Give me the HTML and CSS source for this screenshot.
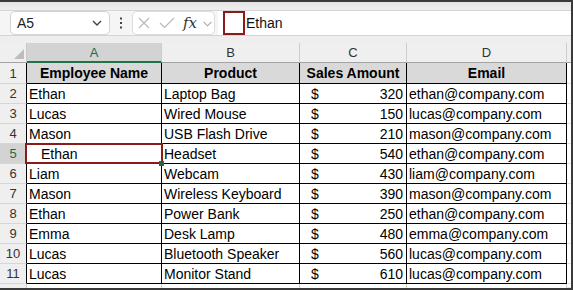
FILE: index.html
```html
<!DOCTYPE html>
<html>
<head>
<meta charset="utf-8">
<link rel="stylesheet" href="styles.css">
</head>
<body>
<div class="app">
  <div class="topband"></div>
  <div class="fbar">
    <div class="namebox"><span>A5</span>
      <svg width="10" height="6" viewBox="0 0 10 6"><polyline points="1,1 5,5 9,1" fill="none" stroke="#444" stroke-width="1.4"/></svg>
    </div>
    <div class="kebab"><svg width="4" height="12" viewBox="0 0 4 12"><rect x="1" y="0.5" width="2" height="2" fill="#444"/><rect x="1" y="5" width="2" height="2" fill="#444"/><rect x="1" y="9.5" width="2" height="2" fill="#444"/></svg></div>
    <div class="fbtns">
      <svg class="ic-x" width="12" height="12" viewBox="0 0 12 12"><path d="M1 1L11 11M11 1L1 11" stroke="#b9b9b9" stroke-width="1.2" fill="none"/></svg>
      <svg class="ic-ok" width="16" height="12" viewBox="0 0 16 12"><polyline points="1,6 5.5,10.5 15,1" stroke="#b9b9b9" stroke-width="1.2" fill="none"/></svg>
      <span class="fx">fx</span>
      <svg class="ic-dd" width="9" height="6" viewBox="0 0 9 6"><polyline points="0.5,0.8 4.5,4.8 8.5,0.8" stroke="#a8a8a8" stroke-width="1.1" fill="none"/></svg>
    </div>
    <div class="finput"><div class="redbox"></div><span class="ftext">Ethan</span></div>
  </div>
  <div class="gapband"></div>
  <div class="sheet">
    <div class="corner"><span class="tri"></span></div>
    <div class="ch sel">A</div>
    <div class="ch">B</div>
    <div class="ch">C</div>
    <div class="ch">D</div>
    <div class="ch end"></div>

    <div class="rh">1</div>
    <div class="c th">Employee Name</div>
    <div class="c th">Product</div>
    <div class="c th">Sales Amount</div>
    <div class="c th">Email</div>
    <div class="f"></div>

    <div class="rh">2</div>
    <div class="c">Ethan</div>
    <div class="c">Laptop Bag</div>
    <div class="c amt"><span>$</span><span>320</span></div>
    <div class="c">ethan@company.com</div>
    <div class="f"></div>

    <div class="rh">3</div>
    <div class="c">Lucas</div>
    <div class="c">Wired Mouse</div>
    <div class="c amt"><span>$</span><span>150</span></div>
    <div class="c">lucas@company.com</div>
    <div class="f"></div>

    <div class="rh">4</div>
    <div class="c">Mason</div>
    <div class="c">USB Flash Drive</div>
    <div class="c amt"><span>$</span><span>210</span></div>
    <div class="c">mason@company.com</div>
    <div class="f"></div>

    <div class="rh selrow">5</div>
    <div class="c active">Ethan</div>
    <div class="c">Headset</div>
    <div class="c amt"><span>$</span><span>540</span></div>
    <div class="c">ethan@company.com</div>
    <div class="f"></div>

    <div class="rh">6</div>
    <div class="c">Liam</div>
    <div class="c">Webcam</div>
    <div class="c amt"><span>$</span><span>430</span></div>
    <div class="c">liam@company.com</div>
    <div class="f"></div>

    <div class="rh">7</div>
    <div class="c">Mason</div>
    <div class="c">Wireless Keyboard</div>
    <div class="c amt"><span>$</span><span>390</span></div>
    <div class="c">mason@company.com</div>
    <div class="f"></div>

    <div class="rh">8</div>
    <div class="c">Ethan</div>
    <div class="c">Power Bank</div>
    <div class="c amt"><span>$</span><span>250</span></div>
    <div class="c">ethan@company.com</div>
    <div class="f"></div>

    <div class="rh">9</div>
    <div class="c">Emma</div>
    <div class="c">Desk Lamp</div>
    <div class="c amt"><span>$</span><span>480</span></div>
    <div class="c">emma@company.com</div>
    <div class="f"></div>

    <div class="rh">10</div>
    <div class="c">Lucas</div>
    <div class="c">Bluetooth Speaker</div>
    <div class="c amt"><span>$</span><span>560</span></div>
    <div class="c">lucas@company.com</div>
    <div class="f"></div>

    <div class="rh">11</div>
    <div class="c">Lucas</div>
    <div class="c">Monitor Stand</div>
    <div class="c amt"><span>$</span><span>610</span></div>
    <div class="c">lucas@company.com</div>
    <div class="f"></div>

    <div class="rh last"></div>
    <div class="g"></div>
    <div class="g"></div>
    <div class="g"></div>
    <div class="g"></div>
    <div class="f"></div>
  </div>
</div>
</body>
</html>
```
FILE: styles.css
```css
* { box-sizing: border-box; margin: 0; padding: 0; }
html, body { width: 573px; height: 290px; overflow: hidden; background: #fff; }
body { font-family: "Liberation Sans", Arial, sans-serif; color: #000; }

.app {
  width: 573px; height: 290px;
  border-top: 2px solid #3a3a3a;
  border-right: 2px solid #3a3a3a;
  border-bottom: 2px solid #3a3a3a;
  display: flex; flex-direction: column;
  background: #efefef;
}
.topband { height: 8px; background: linear-gradient(#e3e3e3, #eeeeee); }

.fbar {
  height: 26px;
  border-top: 1px solid #d4d4d4;
  border-bottom: 1px solid #d4d4d4;
  background: #f5f5f5;
  display: flex;
}
.namebox {
  margin-left: 10px; width: 100px; height: 24px;
  border: 1px solid #d3d3d3; border-radius: 5px; background: #fff;
  display: flex; align-items: center; justify-content: space-between;
  padding: 0 7px 0 6px;
  font-size: 14px; color: #222;
}
.kebab { width: 22px; display: flex; align-items: center; justify-content: center; }
.fbtns {
  width: 83px; height: 24px;
  border: 1px solid #dcdcdc; border-radius: 5px; background: #fff;
  display: flex; align-items: center;
}
.ic-x { margin-left: 5px; }
.ic-ok { margin-left: 9px; }
.fx {
  margin-left: 8px; width: 16px;
  font-family: "DejaVu Serif", "Liberation Serif", serif; font-style: italic;
  font-size: 15px; color: #333; line-height: 16px;
}
.ic-dd { margin-left: 4px; margin-top: 1px; }
.finput {
  flex: 1; margin-left: 3px; background: #fff;
  display: flex; align-items: center;
}
.redbox { margin-left: 5px; width: 22px; height: 24px; border: 2px solid #8b1a1a; }
.ftext { margin-left: 1px; font-size: 14px; color: #111; }

.gapband { height: 7px; background: #eeeeee; }

.sheet {
  height: 245px;
  display: grid;
  grid-template-columns: 27px 135px 138px 107px 160px 1fr;
  grid-template-rows: 20px 21px repeat(10, 20px) 4px;
  background: #fff;
}
.corner {
  background: #efefef;
  border-right: 1px solid #c8c8c8; border-bottom: 1px solid #a3a3a3;
  position: relative;
}
.tri {
  position: absolute; right: 2px; bottom: 3px;
  width: 0; height: 0;
  border-left: 10px solid transparent;
  border-bottom: 10px solid #bdbdbd;
}
.ch {
  background: #efefef;
  border-right: 1px solid #cdcdcd; border-bottom: 1px solid #a3a3a3;
  display: flex; align-items: center; justify-content: center;
  font-size: 13px; color: #333;
}
.ch.sel { background: #d3d3d3; color: #1e6b41; border-bottom: 2px solid #217346; }
.ch.end { border-right: none; }

.rh {
  background: #efefef;
  border-right: 1px solid #000; border-bottom: 1px solid #d6d6d6;
  display: flex; align-items: center; justify-content: center;
  font-size: 13px; color: #333;
}
.rh.selrow { background: #d3d3d3; color: #1e6b41; }
.rh.last { border-right: 1px solid #c8c8c8; border-bottom: none; }

.c {
  border-right: 1px solid #000; border-bottom: 1px solid #000;
  display: flex; align-items: center;
  padding-left: 2px;
  font-size: 14px; white-space: nowrap; overflow: hidden;
}
.c.th { background: #d9d9d9; font-weight: bold; justify-content: center; padding-left: 0; }
.c.amt { justify-content: space-between; padding: 0 3px 0 11px; }
.c.active { padding-left: 14px; position: relative; overflow: visible; }
.c.active::after {
  content: ""; position: absolute;
  left: -2px; top: -1px; right: -2px; bottom: -1px;
  border: 2px solid #8b1a1a;
}
.c.active::before {
  content: ""; position: absolute; z-index: 2;
  right: -3px; bottom: -3px; width: 5px; height: 5px;
  background: #1f6b3d;
}
.f { background: #fff; border-bottom: 1px solid #e2e2e2; }
.g { border-right: 1px solid #d4d4d4; background: #fff; }
```
